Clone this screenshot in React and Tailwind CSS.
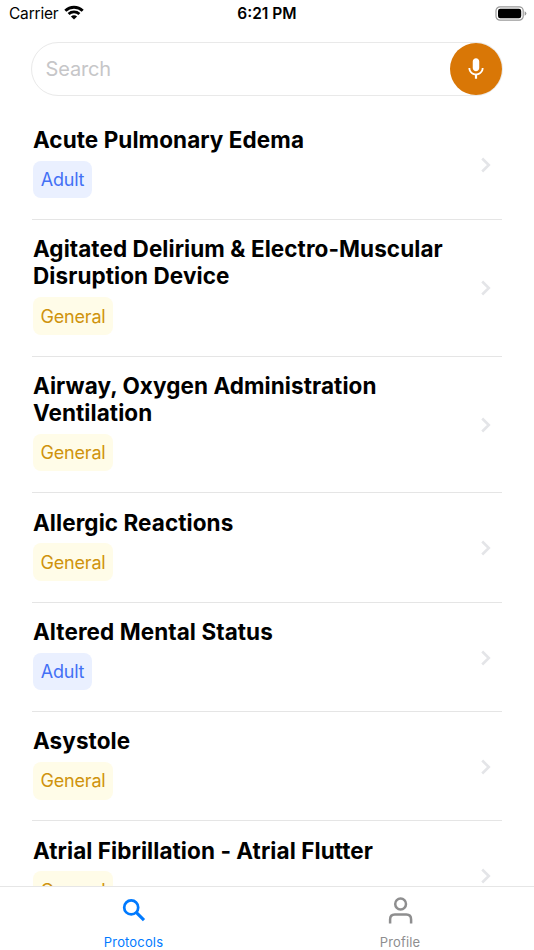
import React from 'react';
import { MdMic } from 'react-icons/md';

const protocols = [
  { lines: ['Acute Pulmonary Edema'], category: 'Adult' },
  { lines: ['Agitated Delirium & Electro-Muscular', 'Disruption Device'], category: 'General' },
  { lines: ['Airway, Oxygen Administration', 'Ventilation'], category: 'General' },
  { lines: ['Allergic Reactions'], category: 'General' },
  { lines: ['Altered Mental Status'], category: 'Adult' },
  { lines: ['Asystole'], category: 'General' },
  { lines: ['Atrial Fibrillation - Atrial Flutter'], category: 'General' },
];

const badgeStyles = {
  Adult: 'w-[59px] bg-[#eaf0ff] text-[#4370f5]',
  General: 'w-[80px] bg-[#fffce8] text-[#cf930d]',
};

const StatusBar = () => (
  <div className="grid h-[27px] shrink-0 grid-cols-3 items-center pl-[9px] pr-[7px] text-black">
    <div className="flex items-center gap-[6px]">
      <span className="text-[15.5px] tracking-[-0.2px]">Carrier</span>
      <svg width="20" height="15" viewBox="0 0 20 15" fill="none" stroke="currentColor" strokeWidth="2.9" className="-mt-0.5">
        <path d="M1.3 5.7C6.2 1.1 13.8 1.1 18.7 5.7" />
        <path d="M4.6 9C7.7 6.2 12.3 6.2 15.4 9" />
        <path d="M10 14.5L6.9 11.4C8.7 9.9 11.3 9.9 13.1 11.4Z" fill="currentColor" stroke="none" />
      </svg>
    </div>
    <div className="-ml-0.5 text-center text-[15.5px] font-semibold">6:21 PM</div>
    <svg width="32" height="15" viewBox="0 0 32 15" className="-mt-px justify-self-end">
      <rect x="1" y="0.8" width="27.2" height="13.4" rx="4" fill="none" stroke="#999" strokeWidth="1.2" />
      <rect x="3" y="2.8" width="23.2" height="9.4" rx="2.2" fill="#000" />
      <path d="M29.6 5.3Q31.4 6 31.4 7.5T29.6 9.7Z" fill="#999" />
    </svg>
  </div>
);

const SearchBar = () => (
  <div className="mx-[31px] mt-[15px] flex h-[54px] shrink-0 items-center justify-between rounded-full border-[1.5px] border-[#e9e9e9] pl-[13.5px]">
    <span className="text-[20px] tracking-[-0.15px] text-[#c6c6c8]">Search</span>
    <button className="flex size-[52px] items-center justify-center rounded-full bg-[#d97706] pr-px text-white">
      <MdMic size={26} />
    </button>
  </div>
);

const ProtocolRow = ({ lines, category }) => (
  <li className="flex shrink-0 items-center border-b border-[#e5e5e5] pb-[20.85px] pt-[15.2px]">
    <div className="flex-1">
      <h2 className="pl-px text-[22.5px] font-bold leading-[27.35px] tracking-[0.07px]">
        {lines.map((line) => (
          <span key={line} className="block whitespace-nowrap">{line}</span>
        ))}
      </h2>
      <span className={`ml-px mt-[7.5px] flex h-[37.5px] items-center justify-center rounded-[8px] text-[18px] tracking-[-0.2px] ${badgeStyles[category]}`}>
        {category}
      </span>
    </div>
    <svg width="10" height="16" viewBox="0 0 10 16" fill="none" stroke="#e4e5e8" strokeWidth="2.6" className="mr-[11px] mt-[7px]">
      <path d="M1.2 1.5L7.8 8L1.2 14.5" />
    </svg>
  </li>
);

const TabBar = () => (
  <nav className="grid h-[64px] shrink-0 grid-cols-2 border-t border-[#e6e6e6] bg-white text-[13px] tracking-[0.15px]">
    <button className="flex flex-col items-center text-[#007aff]">
      <svg width="24" height="24" viewBox="0 0 24 24" fill="none" stroke="currentColor" className="mt-[11px]">
        <circle cx="9.2" cy="9.4" r="7" strokeWidth="2.7" />
        <path d="M14.2 14.4L22 22.2" strokeWidth="3.1" />
      </svg>
      <span className="mt-[11px] leading-[18px]">Protocols</span>
    </button>
    <button className="flex flex-col items-center text-[#8e8e8f]">
      <svg width="26" height="28" viewBox="0 0 26 28" fill="none" stroke="currentColor" strokeWidth="2.5" className="mt-[10px]">
        <circle cx="12.6" cy="7" r="5.4" />
        <path d="M2.1 26.5V22.5C2.1 19.6 3.8 17.6 6.8 17.6H18.4C21.4 17.6 23.1 19.6 23.1 22.5V26.5" />
      </svg>
      <span className="-ml-px mt-[8px] leading-[18px]">Profile</span>
    </button>
  </nav>
);

const App = () => (
  <div className="flex h-screen flex-col overflow-hidden bg-white font-['Inter',sans-serif] text-black">
    <StatusBar />
    <SearchBar />
    <ul className="mx-8 flex min-h-0 flex-1 flex-col overflow-hidden pt-[14.5px]">
      {protocols.map((protocol) => (
        <ProtocolRow key={protocol.lines[0]} {...protocol} />
      ))}
    </ul>
    <TabBar />
  </div>
);

export default App;
